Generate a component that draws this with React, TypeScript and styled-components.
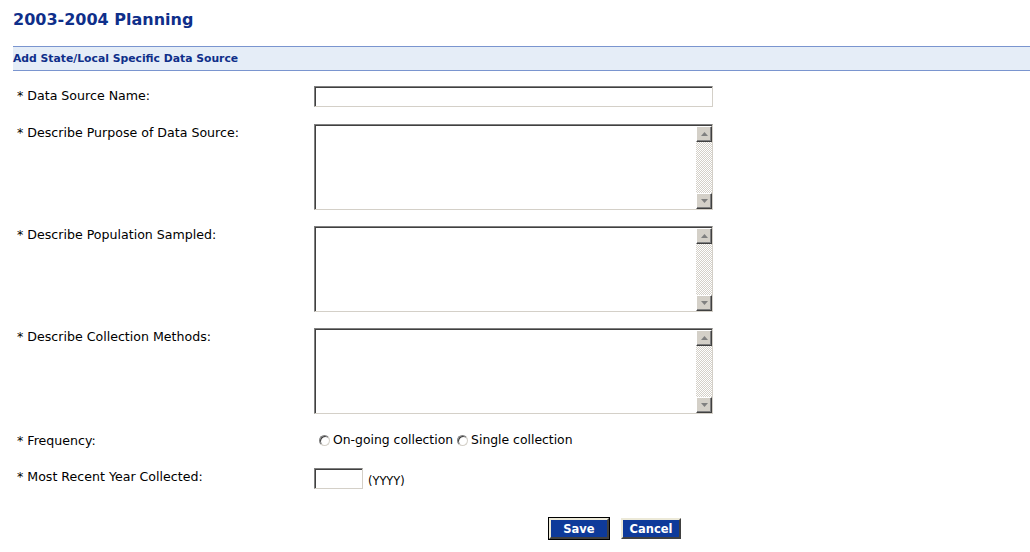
import React from "react";
import styled, { createGlobalStyle } from "styled-components";

const GlobalStyle = createGlobalStyle`
  html, body {
    margin: 0;
    padding: 0;
    background: #ffffff;
  }
  body {
    font-family: "DejaVu Sans", Verdana, sans-serif;
    font-size: 12px;
    color: #000000;
  }
`;

const Page = styled.div`
  width: 1030px;
  height: 552px;
  overflow: hidden;
  padding: 10px 0 0 13px;
  box-sizing: border-box;
`;

const Title = styled.h1`
  margin: 0;
  font-size: 16px;
  font-weight: bold;
  color: #0f2f8a;
  line-height: 20px;
`;

const SectionBar = styled.div`
  margin-top: 16px;
  height: 23px;
  border-top: 1px solid #7a95cf;
  border-bottom: 1px solid #7a95cf;
  background: #e5edf7;
  display: flex;
  align-items: center;
  font-size: 10.8px;
  font-weight: bold;
  color: #0f2f8a;
`;

const Form = styled.div`
  display: flex;
  flex-direction: column;
  padding-top: 15px;
`;

const Row = styled.div<{ $gap: number }>`
  display: grid;
  grid-template-columns: 301px 1fr;
  align-items: start;
  margin-bottom: ${(p) => p.$gap}px;
`;

const Label = styled.div<{ $top?: number }>`
  padding-left: 4px;
  padding-top: ${(p) => p.$top ?? 1}px;
  font-size: 12.6px;
  line-height: 16px;
  color: #000;
  white-space: nowrap;
`;

const Inset = styled.div<{ $w: number; $h: number }>`
  width: ${(p) => p.$w}px;
  height: ${(p) => p.$h}px;
  box-sizing: border-box;
  border-top: 1px solid #808080;
  border-left: 1px solid #808080;
  border-right: 1px solid #d4d0c8;
  border-bottom: 1px solid #d4d0c8;
  background: #fff;
  display: flex;
`;

const InsetInner = styled.div`
  flex: 1;
  min-width: 0;
  display: flex;
  border-top: 1px solid #404040;
  border-left: 1px solid #404040;
`;

const TextInput = styled.input`
  flex: 1;
  width: 0;
  min-width: 0;
  border: none;
  outline: none;
  padding: 0 2px;
  font-family: inherit;
  font-size: 12px;
  background: transparent;
`;

const TextArea = styled.textarea`
  flex: 1;
  border: none;
  outline: none;
  resize: none;
  overflow: hidden;
  padding: 2px;
  font-family: inherit;
  font-size: 12px;
`;

const Scrollbar = styled.div`
  width: 16px;
  display: flex;
  flex-direction: column;
  background-color: #f4f3ee;
  background-image: repeating-conic-gradient(#d4d0c8 0 25%, #ffffff 0 50%);
  background-size: 2px 2px;
`;

const ScrollButton = styled.div`
  width: 16px;
  height: 16px;
  box-sizing: border-box;
  background: #d4d0c8;
  border-top: 1px solid #ffffff;
  border-left: 1px solid #ffffff;
  border-right: 1px solid #404040;
  border-bottom: 1px solid #404040;
  box-shadow: inset -1px -1px 0 #808080;
  display: flex;
  align-items: center;
  justify-content: center;
`;

const Track = styled.div`
  flex: 1;
`;

const Arrow = ({ up }: { up?: boolean }) => (
  <svg width="7" height="4" viewBox="0 0 7 4">
    <path d={up ? "M3.5 0 L7 4 L0 4 Z" : "M0 0 L7 0 L3.5 4 Z"} fill="#808080" />
  </svg>
);

const RadioRow = styled.div`
  display: flex;
  align-items: center;
  padding-left: 5px;
  font-size: 12.4px;
  line-height: 16px;
`;

const RadioMark = styled.span`
  width: 11px;
  height: 11px;
  border-radius: 50%;
  box-sizing: border-box;
  border: 1px solid #808080;
  border-right-color: #d4d0c8;
  border-bottom-color: #d4d0c8;
  background: radial-gradient(circle at 60% 60%, #ffffff 40%, #e8e8e8 100%);
  box-shadow: inset 1px 1px 0 #404040;
  display: inline-block;
  margin-right: 3px;
`;

const RadioOption = styled.label`
  display: inline-flex;
  align-items: center;
  margin-right: 4px;
`;

const YearWrap = styled.div`
  display: flex;
  align-items: center;
  gap: 5px;
`;

const Hint = styled.span`
  font-size: 11.4px;
  padding-top: 5px;
`;

const Buttons = styled.div`
  display: flex;
  gap: 12px;
  padding-left: 536px;
`;

const Button = styled.button<{ $default?: boolean }>`
  width: 60px;
  height: 21px;
  box-sizing: border-box;
  padding: 0;
  background: #0e3a9a;
  color: #ffffff;
  font-family: inherit;
  font-size: 11.5px;
  font-weight: bold;
  border-top: 2px solid #ece9d8;
  border-left: 2px solid #ece9d8;
  border-right: 2px solid #404040;
  border-bottom: 2px solid #404040;
  outline: ${(p) => (p.$default ? "1px solid #000" : "none")};
  cursor: pointer;
`;

const Field = ({ w, h }: { w: number; h: number }) => (
  <Inset $w={w} $h={h}>
    <InsetInner>
      <TextInput />
    </InsetInner>
  </Inset>
);

const Memo = () => (
  <Inset $w={399} $h={86}>
    <InsetInner>
      <TextArea />
      <Scrollbar>
        <ScrollButton>
          <Arrow up />
        </ScrollButton>
        <Track />
        <ScrollButton>
          <Arrow />
        </ScrollButton>
      </Scrollbar>
    </InsetInner>
  </Inset>
);

export default function App() {
  return (
    <>
      <GlobalStyle />
      <Page>
        <Title>2003-2004 Planning</Title>
        <SectionBar>Add State/Local Specific Data Source</SectionBar>
        <Form>
          <Row $gap={17}>
            <Label $top={2}>* Data Source Name:</Label>
            <Field w={399} h={21} />
          </Row>
          <Row $gap={16}>
            <Label>* Describe Purpose of Data Source:</Label>
            <Memo />
          </Row>
          <Row $gap={16}>
            <Label>* Describe Population Sampled:</Label>
            <Memo />
          </Row>
          <Row $gap={18}>
            <Label>* Describe Collection Methods:</Label>
            <Memo />
          </Row>
          <Row $gap={19}>
            <Label>* Frequency:</Label>
            <RadioRow>
              <RadioOption>
                <RadioMark />
                On-going collection
              </RadioOption>
              <RadioOption>
                <RadioMark />
                Single collection
              </RadioOption>
            </RadioRow>
          </Row>
          <Row $gap={29}>
            <Label $top={1}>* Most Recent Year Collected:</Label>
            <YearWrap>
              <Field w={49} h={21} />
              <Hint>(YYYY)</Hint>
            </YearWrap>
          </Row>
          <Buttons>
            <Button $default>Save</Button>
            <Button>Cancel</Button>
          </Buttons>
        </Form>
      </Page>
    </>
  );
}
